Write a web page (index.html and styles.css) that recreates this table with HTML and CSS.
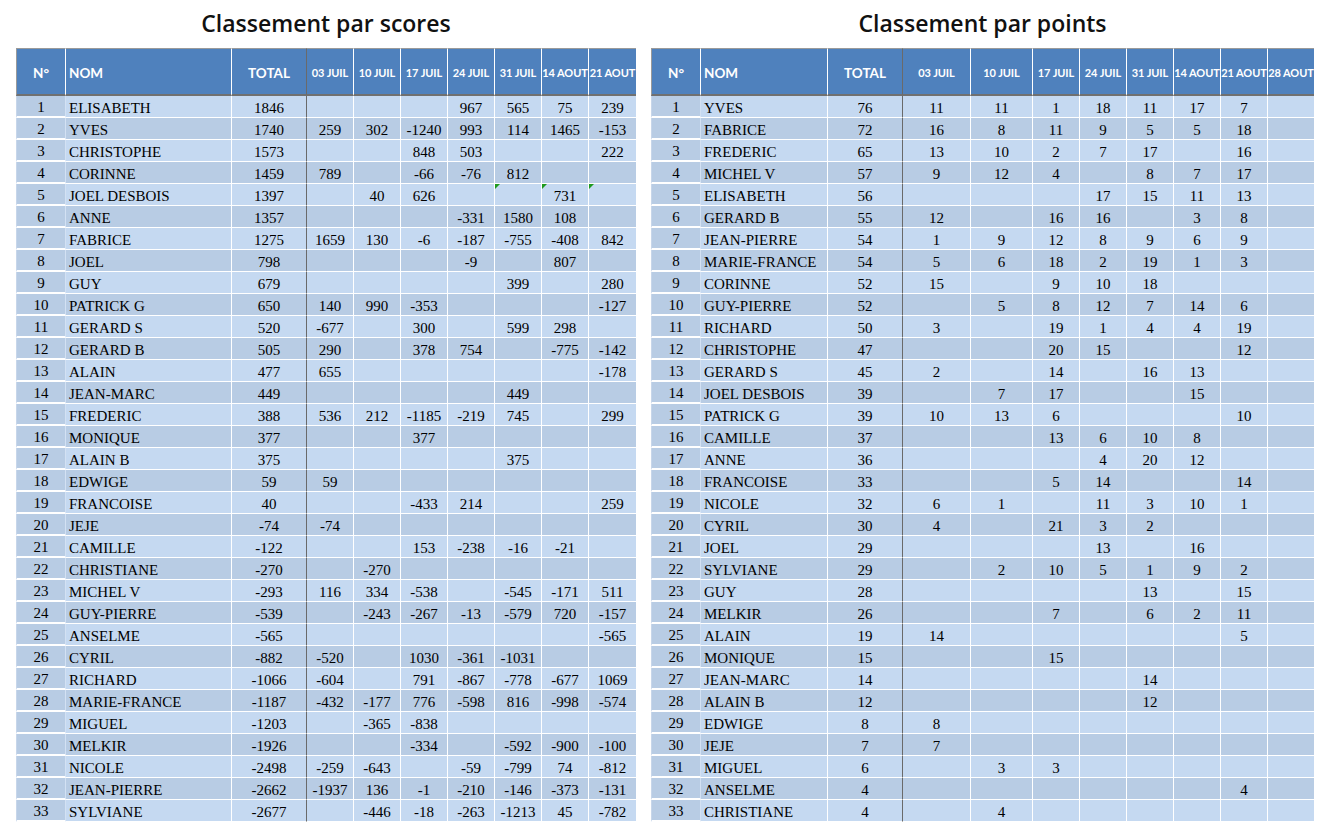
FILE: index.html
```html
<!DOCTYPE html>
<html lang="fr">
<head>
<meta charset="utf-8">
<title>Classements</title>
<link rel="stylesheet" href="styles.css">
</head>
<body>
<div class="board">
  <section class="panel panel-scores">
    <h1 class="panel-title">Classement par scores</h1>
    <table class="grid">
      <colgroup><col class="w-n"><col class="w-name-l"><col class="w-tot"><col class="w-d"><col class="w-d"><col class="w-d"><col class="w-d"><col class="w-d"><col class="w-d"><col class="w-d"></colgroup>
      <thead>
        <tr><th class="c-n h-big">N°</th><th class="c-name h-big">NOM</th><th class="c-tot h-big">TOTAL</th><th>03 JUIL</th><th>10 JUIL</th><th>17 JUIL</th><th>24 JUIL</th><th>31 JUIL</th><th>14 AOUT</th><th class="last">21 AOUT</th></tr>
      </thead>
      <tbody>
        <tr><td class="c-n">1</td><td class="c-name">ELISABETH</td><td class="c-tot">1846</td><td></td><td></td><td></td><td>967</td><td>565</td><td>75</td><td class="last">239</td></tr>
        <tr><td class="c-n">2</td><td class="c-name">YVES</td><td class="c-tot">1740</td><td>259</td><td>302</td><td>-1240</td><td>993</td><td>114</td><td>1465</td><td class="last">-153</td></tr>
        <tr><td class="c-n">3</td><td class="c-name">CHRISTOPHE</td><td class="c-tot">1573</td><td></td><td></td><td>848</td><td>503</td><td></td><td></td><td class="last">222</td></tr>
        <tr><td class="c-n">4</td><td class="c-name">CORINNE</td><td class="c-tot">1459</td><td>789</td><td></td><td>-66</td><td>-76</td><td>812</td><td></td><td class="last"></td></tr>
        <tr><td class="c-n">5</td><td class="c-name">JOEL DESBOIS</td><td class="c-tot">1397</td><td></td><td>40</td><td>626</td><td></td><td class="flag"></td><td class="flag">731</td><td class="last flag"></td></tr>
        <tr><td class="c-n">6</td><td class="c-name">ANNE</td><td class="c-tot">1357</td><td></td><td></td><td></td><td>-331</td><td>1580</td><td>108</td><td class="last"></td></tr>
        <tr><td class="c-n">7</td><td class="c-name">FABRICE</td><td class="c-tot">1275</td><td>1659</td><td>130</td><td>-6</td><td>-187</td><td>-755</td><td>-408</td><td class="last">842</td></tr>
        <tr><td class="c-n">8</td><td class="c-name">JOEL</td><td class="c-tot">798</td><td></td><td></td><td></td><td>-9</td><td></td><td>807</td><td class="last"></td></tr>
        <tr><td class="c-n">9</td><td class="c-name">GUY</td><td class="c-tot">679</td><td></td><td></td><td></td><td></td><td>399</td><td></td><td class="last">280</td></tr>
        <tr><td class="c-n">10</td><td class="c-name">PATRICK G</td><td class="c-tot">650</td><td>140</td><td>990</td><td>-353</td><td></td><td></td><td></td><td class="last">-127</td></tr>
        <tr><td class="c-n">11</td><td class="c-name">GERARD S</td><td class="c-tot">520</td><td>-677</td><td></td><td>300</td><td></td><td>599</td><td>298</td><td class="last"></td></tr>
        <tr><td class="c-n">12</td><td class="c-name">GERARD B</td><td class="c-tot">505</td><td>290</td><td></td><td>378</td><td>754</td><td></td><td>-775</td><td class="last">-142</td></tr>
        <tr><td class="c-n">13</td><td class="c-name">ALAIN</td><td class="c-tot">477</td><td>655</td><td></td><td></td><td></td><td></td><td></td><td class="last">-178</td></tr>
        <tr><td class="c-n">14</td><td class="c-name">JEAN-MARC</td><td class="c-tot">449</td><td></td><td></td><td></td><td></td><td>449</td><td></td><td class="last"></td></tr>
        <tr><td class="c-n">15</td><td class="c-name">FREDERIC</td><td class="c-tot">388</td><td>536</td><td>212</td><td>-1185</td><td>-219</td><td>745</td><td></td><td class="last">299</td></tr>
        <tr><td class="c-n">16</td><td class="c-name">MONIQUE</td><td class="c-tot">377</td><td></td><td></td><td>377</td><td></td><td></td><td></td><td class="last"></td></tr>
        <tr><td class="c-n">17</td><td class="c-name">ALAIN B</td><td class="c-tot">375</td><td></td><td></td><td></td><td></td><td>375</td><td></td><td class="last"></td></tr>
        <tr><td class="c-n">18</td><td class="c-name">EDWIGE</td><td class="c-tot">59</td><td>59</td><td></td><td></td><td></td><td></td><td></td><td class="last"></td></tr>
        <tr><td class="c-n">19</td><td class="c-name">FRANCOISE</td><td class="c-tot">40</td><td></td><td></td><td>-433</td><td>214</td><td></td><td></td><td class="last">259</td></tr>
        <tr><td class="c-n">20</td><td class="c-name">JEJE</td><td class="c-tot">-74</td><td>-74</td><td></td><td></td><td></td><td></td><td></td><td class="last"></td></tr>
        <tr><td class="c-n">21</td><td class="c-name">CAMILLE</td><td class="c-tot">-122</td><td></td><td></td><td>153</td><td>-238</td><td>-16</td><td>-21</td><td class="last"></td></tr>
        <tr><td class="c-n">22</td><td class="c-name">CHRISTIANE</td><td class="c-tot">-270</td><td></td><td>-270</td><td></td><td></td><td></td><td></td><td class="last"></td></tr>
        <tr><td class="c-n">23</td><td class="c-name">MICHEL V</td><td class="c-tot">-293</td><td>116</td><td>334</td><td>-538</td><td></td><td>-545</td><td>-171</td><td class="last">511</td></tr>
        <tr><td class="c-n">24</td><td class="c-name">GUY-PIERRE</td><td class="c-tot">-539</td><td></td><td>-243</td><td>-267</td><td>-13</td><td>-579</td><td>720</td><td class="last">-157</td></tr>
        <tr><td class="c-n">25</td><td class="c-name">ANSELME</td><td class="c-tot">-565</td><td></td><td></td><td></td><td></td><td></td><td></td><td class="last">-565</td></tr>
        <tr><td class="c-n">26</td><td class="c-name">CYRIL</td><td class="c-tot">-882</td><td>-520</td><td></td><td>1030</td><td>-361</td><td>-1031</td><td></td><td class="last"></td></tr>
        <tr><td class="c-n">27</td><td class="c-name">RICHARD</td><td class="c-tot">-1066</td><td>-604</td><td></td><td>791</td><td>-867</td><td>-778</td><td>-677</td><td class="last">1069</td></tr>
        <tr><td class="c-n">28</td><td class="c-name">MARIE-FRANCE</td><td class="c-tot">-1187</td><td>-432</td><td>-177</td><td>776</td><td>-598</td><td>816</td><td>-998</td><td class="last">-574</td></tr>
        <tr><td class="c-n">29</td><td class="c-name">MIGUEL</td><td class="c-tot">-1203</td><td></td><td>-365</td><td>-838</td><td></td><td></td><td></td><td class="last"></td></tr>
        <tr><td class="c-n">30</td><td class="c-name">MELKIR</td><td class="c-tot">-1926</td><td></td><td></td><td>-334</td><td></td><td>-592</td><td>-900</td><td class="last">-100</td></tr>
        <tr><td class="c-n">31</td><td class="c-name">NICOLE</td><td class="c-tot">-2498</td><td>-259</td><td>-643</td><td></td><td>-59</td><td>-799</td><td>74</td><td class="last">-812</td></tr>
        <tr><td class="c-n">32</td><td class="c-name">JEAN-PIERRE</td><td class="c-tot">-2662</td><td>-1937</td><td>136</td><td>-1</td><td>-210</td><td>-146</td><td>-373</td><td class="last">-131</td></tr>
        <tr><td class="c-n">33</td><td class="c-name">SYLVIANE</td><td class="c-tot">-2677</td><td></td><td>-446</td><td>-18</td><td>-263</td><td>-1213</td><td>45</td><td class="last">-782</td></tr>
      </tbody>
    </table>
  </section>

  <section class="panel panel-points">
    <h1 class="panel-title">Classement par points</h1>
    <table class="grid">
      <colgroup><col class="w-n"><col class="w-name-r"><col class="w-tot"><col class="w-d1"><col class="w-d2"><col class="w-d"><col class="w-d"><col class="w-d"><col class="w-d"><col class="w-d"><col class="w-dl"></colgroup>
      <thead>
        <tr><th class="c-n h-big">N°</th><th class="c-name h-big">NOM</th><th class="c-tot h-big">TOTAL</th><th>03 JUIL</th><th>10 JUIL</th><th>17 JUIL</th><th>24 JUIL</th><th>31 JUIL</th><th>14 AOUT</th><th>21 AOUT</th><th class="last">28 AOUT</th></tr>
      </thead>
      <tbody>
        <tr><td class="c-n">1</td><td class="c-name">YVES</td><td class="c-tot">76</td><td>11</td><td>11</td><td>1</td><td>18</td><td>11</td><td>17</td><td>7</td><td class="last"></td></tr>
        <tr><td class="c-n">2</td><td class="c-name">FABRICE</td><td class="c-tot">72</td><td>16</td><td>8</td><td>11</td><td>9</td><td>5</td><td>5</td><td>18</td><td class="last"></td></tr>
        <tr><td class="c-n">3</td><td class="c-name">FREDERIC</td><td class="c-tot">65</td><td>13</td><td>10</td><td>2</td><td>7</td><td>17</td><td></td><td>16</td><td class="last"></td></tr>
        <tr><td class="c-n">4</td><td class="c-name">MICHEL V</td><td class="c-tot">57</td><td>9</td><td>12</td><td>4</td><td></td><td>8</td><td>7</td><td>17</td><td class="last"></td></tr>
        <tr><td class="c-n">5</td><td class="c-name">ELISABETH</td><td class="c-tot">56</td><td></td><td></td><td></td><td>17</td><td>15</td><td>11</td><td>13</td><td class="last"></td></tr>
        <tr><td class="c-n">6</td><td class="c-name">GERARD B</td><td class="c-tot">55</td><td>12</td><td></td><td>16</td><td>16</td><td></td><td>3</td><td>8</td><td class="last"></td></tr>
        <tr><td class="c-n">7</td><td class="c-name">JEAN-PIERRE</td><td class="c-tot">54</td><td>1</td><td>9</td><td>12</td><td>8</td><td>9</td><td>6</td><td>9</td><td class="last"></td></tr>
        <tr><td class="c-n">8</td><td class="c-name">MARIE-FRANCE</td><td class="c-tot">54</td><td>5</td><td>6</td><td>18</td><td>2</td><td>19</td><td>1</td><td>3</td><td class="last"></td></tr>
        <tr><td class="c-n">9</td><td class="c-name">CORINNE</td><td class="c-tot">52</td><td>15</td><td></td><td>9</td><td>10</td><td>18</td><td></td><td></td><td class="last"></td></tr>
        <tr><td class="c-n">10</td><td class="c-name">GUY-PIERRE</td><td class="c-tot">52</td><td></td><td>5</td><td>8</td><td>12</td><td>7</td><td>14</td><td>6</td><td class="last"></td></tr>
        <tr><td class="c-n">11</td><td class="c-name">RICHARD</td><td class="c-tot">50</td><td>3</td><td></td><td>19</td><td>1</td><td>4</td><td>4</td><td>19</td><td class="last"></td></tr>
        <tr><td class="c-n">12</td><td class="c-name">CHRISTOPHE</td><td class="c-tot">47</td><td></td><td></td><td>20</td><td>15</td><td></td><td></td><td>12</td><td class="last"></td></tr>
        <tr><td class="c-n">13</td><td class="c-name">GERARD S</td><td class="c-tot">45</td><td>2</td><td></td><td>14</td><td></td><td>16</td><td>13</td><td></td><td class="last"></td></tr>
        <tr><td class="c-n">14</td><td class="c-name">JOEL DESBOIS</td><td class="c-tot">39</td><td></td><td>7</td><td>17</td><td></td><td></td><td>15</td><td></td><td class="last"></td></tr>
        <tr><td class="c-n">15</td><td class="c-name">PATRICK G</td><td class="c-tot">39</td><td>10</td><td>13</td><td>6</td><td></td><td></td><td></td><td>10</td><td class="last"></td></tr>
        <tr><td class="c-n">16</td><td class="c-name">CAMILLE</td><td class="c-tot">37</td><td></td><td></td><td>13</td><td>6</td><td>10</td><td>8</td><td></td><td class="last"></td></tr>
        <tr><td class="c-n">17</td><td class="c-name">ANNE</td><td class="c-tot">36</td><td></td><td></td><td></td><td>4</td><td>20</td><td>12</td><td></td><td class="last"></td></tr>
        <tr><td class="c-n">18</td><td class="c-name">FRANCOISE</td><td class="c-tot">33</td><td></td><td></td><td>5</td><td>14</td><td></td><td></td><td>14</td><td class="last"></td></tr>
        <tr><td class="c-n">19</td><td class="c-name">NICOLE</td><td class="c-tot">32</td><td>6</td><td>1</td><td></td><td>11</td><td>3</td><td>10</td><td>1</td><td class="last"></td></tr>
        <tr><td class="c-n">20</td><td class="c-name">CYRIL</td><td class="c-tot">30</td><td>4</td><td></td><td>21</td><td>3</td><td>2</td><td></td><td></td><td class="last"></td></tr>
        <tr><td class="c-n">21</td><td class="c-name">JOEL</td><td class="c-tot">29</td><td></td><td></td><td></td><td>13</td><td></td><td>16</td><td></td><td class="last"></td></tr>
        <tr><td class="c-n">22</td><td class="c-name">SYLVIANE</td><td class="c-tot">29</td><td></td><td>2</td><td>10</td><td>5</td><td>1</td><td>9</td><td>2</td><td class="last"></td></tr>
        <tr><td class="c-n">23</td><td class="c-name">GUY</td><td class="c-tot">28</td><td></td><td></td><td></td><td></td><td>13</td><td></td><td>15</td><td class="last"></td></tr>
        <tr><td class="c-n">24</td><td class="c-name">MELKIR</td><td class="c-tot">26</td><td></td><td></td><td>7</td><td></td><td>6</td><td>2</td><td>11</td><td class="last"></td></tr>
        <tr><td class="c-n">25</td><td class="c-name">ALAIN</td><td class="c-tot">19</td><td>14</td><td></td><td></td><td></td><td></td><td></td><td>5</td><td class="last"></td></tr>
        <tr><td class="c-n">26</td><td class="c-name">MONIQUE</td><td class="c-tot">15</td><td></td><td></td><td>15</td><td></td><td></td><td></td><td></td><td class="last"></td></tr>
        <tr><td class="c-n">27</td><td class="c-name">JEAN-MARC</td><td class="c-tot">14</td><td></td><td></td><td></td><td></td><td>14</td><td></td><td></td><td class="last"></td></tr>
        <tr><td class="c-n">28</td><td class="c-name">ALAIN B</td><td class="c-tot">12</td><td></td><td></td><td></td><td></td><td>12</td><td></td><td></td><td class="last"></td></tr>
        <tr><td class="c-n">29</td><td class="c-name">EDWIGE</td><td class="c-tot">8</td><td>8</td><td></td><td></td><td></td><td></td><td></td><td></td><td class="last"></td></tr>
        <tr><td class="c-n">30</td><td class="c-name">JEJE</td><td class="c-tot">7</td><td>7</td><td></td><td></td><td></td><td></td><td></td><td></td><td class="last"></td></tr>
        <tr><td class="c-n">31</td><td class="c-name">MIGUEL</td><td class="c-tot">6</td><td></td><td>3</td><td>3</td><td></td><td></td><td></td><td></td><td class="last"></td></tr>
        <tr><td class="c-n">32</td><td class="c-name">ANSELME</td><td class="c-tot">4</td><td></td><td></td><td></td><td></td><td></td><td></td><td>4</td><td class="last"></td></tr>
        <tr><td class="c-n">33</td><td class="c-name">CHRISTIANE</td><td class="c-tot">4</td><td></td><td>4</td><td></td><td></td><td></td><td></td><td></td><td class="last"></td></tr>
      </tbody>
    </table>
  </section>
</div>
</body>
</html>
```

FILE: styles.css
```css
* { box-sizing: border-box; }

html, body {
  margin: 0;
  padding: 0;
  background: #ffffff;
}

body {
  font-family: "Liberation Serif", "Times New Roman", serif;
  color: #000;
}

.board {
  display: flex;
  align-items: flex-start;
  gap: 15px;
  padding-left: 16px;
}

.panel-scores { width: 620px; }
.panel-points { width: 663px; }

.panel-title {
  margin: 0;
  height: 48px;
  line-height: 46px;
  text-align: center;
  font-family: "Open Sans", "Noto Sans", sans-serif;
  font-weight: 600;
  font-size: 23px;
  color: #111;
}

.grid {
  width: 100%;
  table-layout: fixed;
  border-collapse: separate;
  border-spacing: 0;
}

.w-n { width: 50px; }
.w-name-l { width: 166px; }
.w-name-r { width: 127px; }
.w-tot { width: 75px; }
.w-d { width: 47px; }
.w-d1 { width: 68px; }
.w-d2 { width: 62px; }
.w-dl { width: 46px; }

.grid th {
  background: #4f81bd;
  color: #ffffff;
  font-family: Lato, "Liberation Sans", sans-serif;
  font-weight: 700;
  font-size: 11px;
  letter-spacing: -0.1px;
  line-height: 42px;
  padding: 3px 0 0;
  text-align: center;
  white-space: nowrap;
  overflow: hidden;
  border-top: 1px solid #9a9a9a;
  border-bottom: 2px solid #707070;
  border-right: 1px solid #ffffff;
}

.grid th.h-big {
  font-size: 13.5px;
  letter-spacing: 0;
}

.grid th.c-n {
  border-left: 1px solid #9a9a9a;
}

.grid th.c-name {
  text-align: left;
  padding-left: 3px;
}

.grid th.last,
.grid td.last {
  border-right: 0;
}

.grid td {
  font-size: 15px;
  line-height: 18px;
  height: 22px;
  padding: 3px 0 0;
  text-align: center;
  white-space: nowrap;
  border-right: 1px solid #ffffff;
  border-bottom: 1px solid #ffffff;
  background: #c5d9f1;
}

.grid tbody tr:nth-child(even) td {
  background: #b8cce4;
}

.grid td.c-n,
.grid tbody tr:nth-child(even) td.c-n {
  background: #b8cce4;
  border-left: 1px solid #c7d6ea;
  border-right: 1px solid #d3e1f3;
  border-bottom: 2px solid #ffffff;
  line-height: 17px;
}

.grid td.c-name {
  text-align: left;
  padding-left: 3px;
}

.grid th.c-tot,
.grid td.c-tot {
  border-right: 1px solid #6a6a6a;
}

.grid td.flag {
  position: relative;
}

.grid td.flag::before {
  content: "";
  position: absolute;
  left: 0;
  top: 0;
  width: 0;
  height: 0;
  border-top: 5px solid #1e9a1e;
  border-right: 5px solid transparent;
}
```
